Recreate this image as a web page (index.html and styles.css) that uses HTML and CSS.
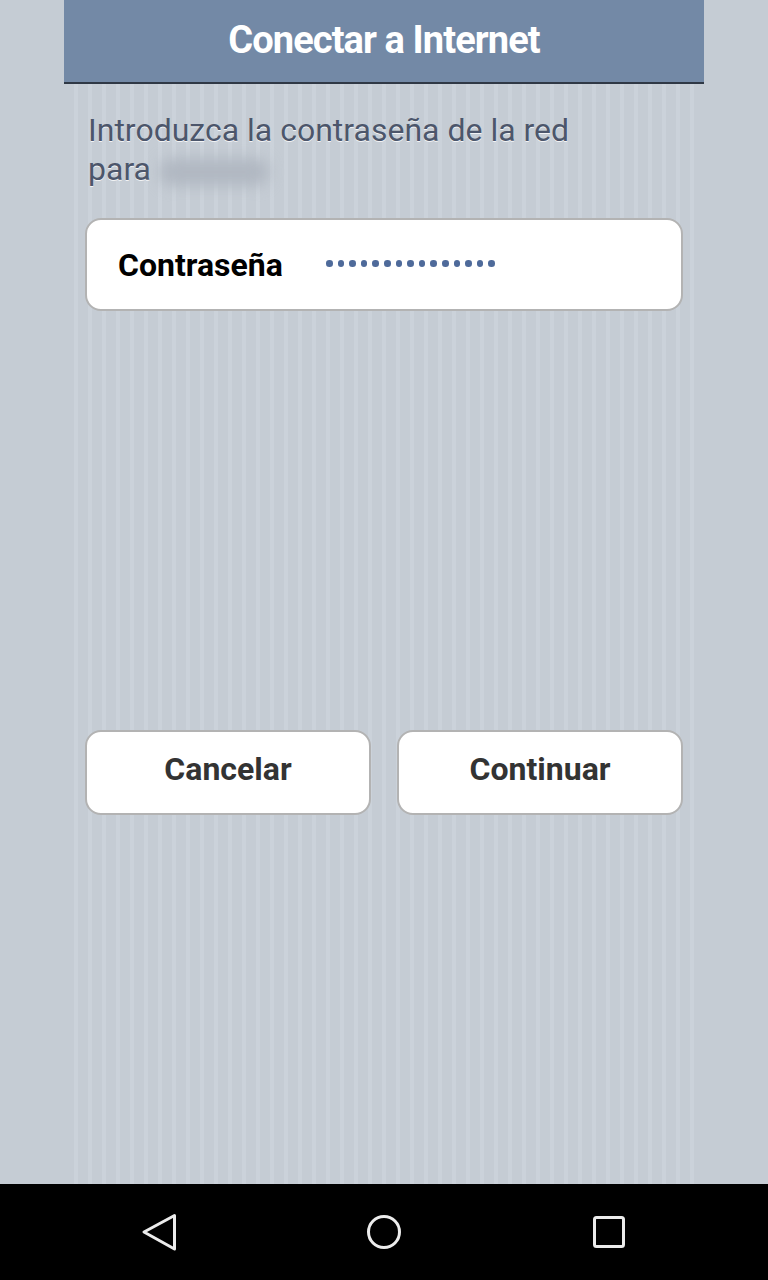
FILE: index.html
```html
<!DOCTYPE html>
<html>
<head>
  <meta name="viewport" content="width=device-width,initial-scale=1.0">
  <title>Conectar a Internet</title>
  <link rel="stylesheet" href="styles.css">
</head>
<body>
  <div class="screen">
    <div class="panel">
      <div class="titlebar">Conectar a Internet</div>

      <p class="intro">Introduzca la contraseña de la red<br>para <span class="hidden-name"></span></p>

      <div class="field">
        <span class="field-label">Contraseña</span>
        <span class="field-dots">
          <i></i><i></i><i></i><i></i><i></i><i></i><i></i><i></i><i></i><i></i><i></i><i></i><i></i><i></i><i></i>
        </span>
      </div>

      <div class="actions">
        <button type="button" class="btn">Cancelar</button>
        <button type="button" class="btn">Continuar</button>
      </div>
    </div>
  </div>

  <div class="navbar">
    <svg width="40" height="40" viewBox="0 0 40 40">
      <path d="M35.5 3.5 L5 20 L35.5 37 Z" fill="none" stroke="#ececec" stroke-width="3" stroke-linejoin="round"/>
    </svg>
    <svg width="40" height="40" viewBox="0 0 40 40">
      <circle cx="20" cy="20" r="15.5" fill="none" stroke="#ececec" stroke-width="3"/>
    </svg>
    <svg width="40" height="40" viewBox="0 0 40 40">
      <rect x="5.5" y="5.5" width="29" height="29" rx="2" fill="none" stroke="#ececec" stroke-width="3"/>
    </svg>
  </div>
</body>
</html>
```

FILE: styles.css
```css
body {
  margin: 0;
  background: #c5ccd4;
  font-family: Roboto, "Liberation Sans", sans-serif;
}

.screen {
  height: 1184px;
  overflow: hidden;
}

.panel {
  width: 640px;
  height: 1184px;
  margin: 0 auto;
  background: repeating-linear-gradient(90deg, #c5ccd4 0, #c5ccd4 10px, #cbd2da 10px, #cbd2da 14px);
}

.titlebar {
  height: 82px;
  line-height: 80px;
  background: #7389a6;
  border-bottom: 2px solid #2f3845;
  color: #fff;
  font-size: 38px;
  font-weight: bold;
  text-align: center;
  letter-spacing: -0.9px;
}

.intro {
  margin: 27px 0 0 24px;
  font-size: 32px;
  line-height: 39px;
  color: #4c566b;
  text-shadow: 0 1px 0 rgba(255, 255, 255, 0.8);
}

.hidden-name {
  display: inline-block;
  width: 110px;
  height: 28px;
  vertical-align: -6px;
  background: #b1b8c2;
  border-radius: 14px;
  filter: blur(7px);
}

.field {
  display: flex;
  align-items: center;
  margin: 29px 21px 0;
  height: 89px;
  padding: 0 31px;
  background: #fff;
  border: 2px solid #b3b3b3;
  border-radius: 16px;
}

.field-label {
  width: 208px;
  font-size: 32px;
  font-weight: bold;
  color: #000;
}

.field-dots {
  display: flex;
  gap: 5px;
  padding-bottom: 2px;
}

.field-dots i {
  width: 6.6px;
  height: 6.6px;
  border-radius: 50%;
  background: #4e6a9a;
}

.actions {
  display: flex;
  gap: 26px;
  margin: 419px 21px 0;
}

.btn {
  flex: 1;
  height: 85px;
  background: #fff;
  border: 2px solid #b3b3b3;
  border-radius: 16px;
  font-family: Roboto, "Liberation Sans", sans-serif;
  font-size: 32px;
  font-weight: bold;
  color: #333;
  padding: 0 0 8px;
}

.navbar {
  height: 96px;
  background: #000;
  display: flex;
  align-items: center;
  justify-content: center;
  gap: 185px;
}
```
